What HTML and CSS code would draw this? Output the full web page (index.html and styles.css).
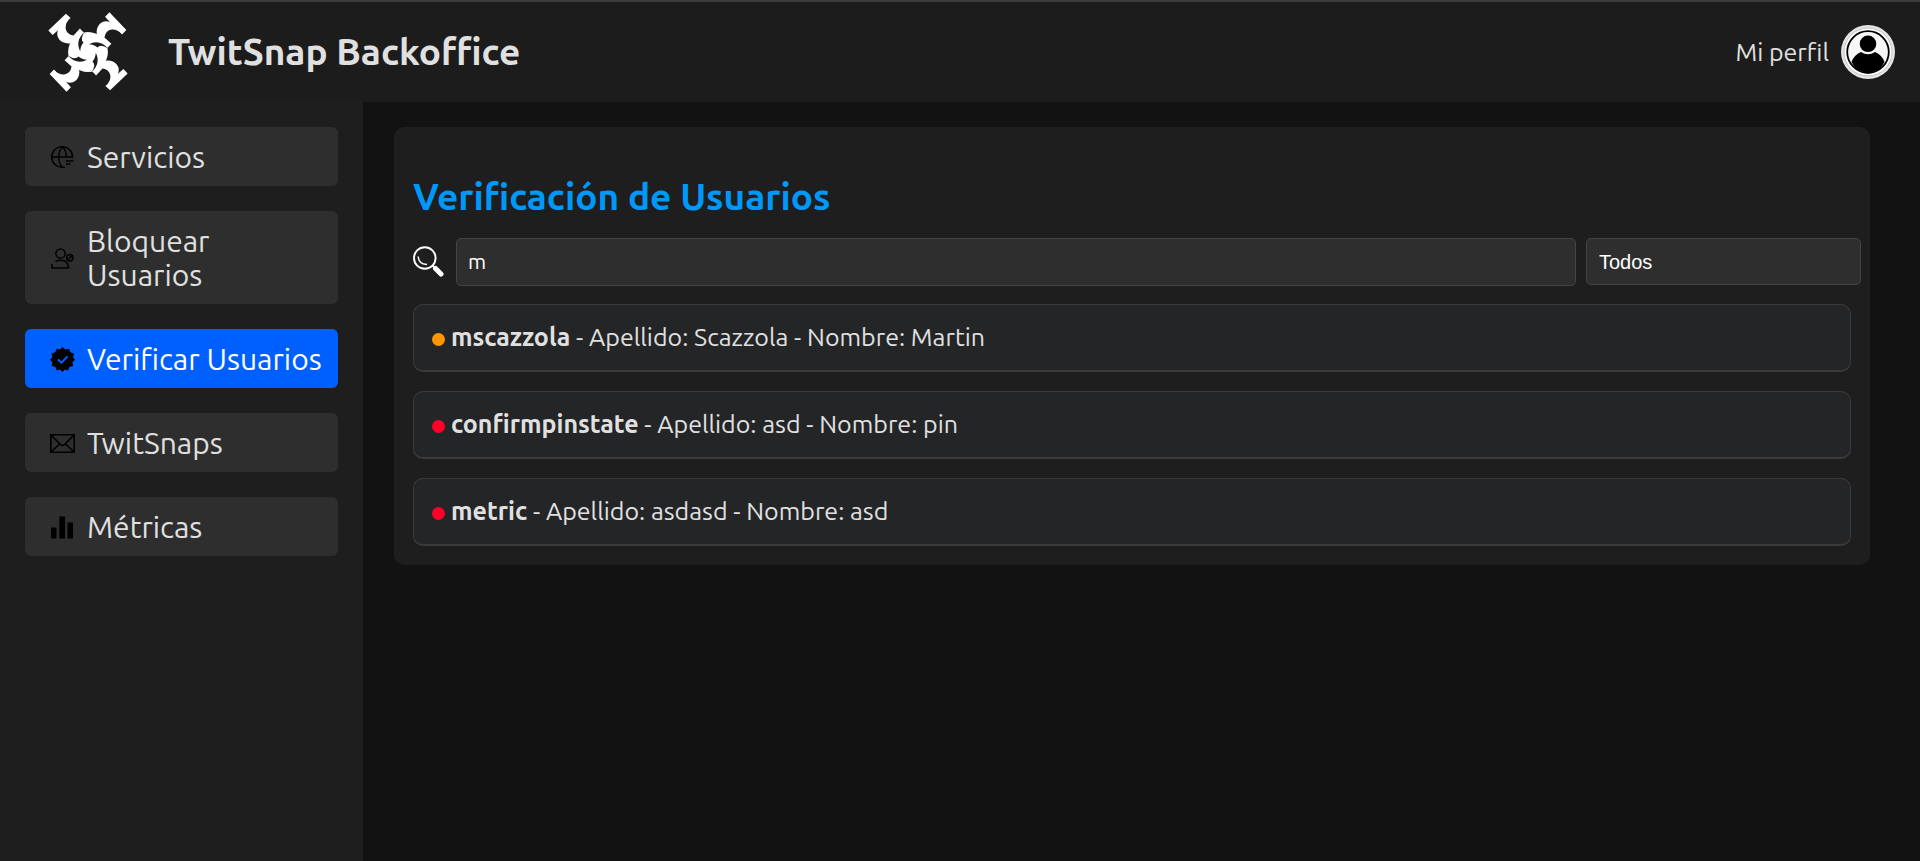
FILE: index.html
```html
<!DOCTYPE html>
<html lang="es">
<head>
<meta charset="utf-8">
<meta name="viewport" content="width=device-width, initial-scale=1">
<title>TwitSnap Backoffice</title>
<link rel="stylesheet" href="styles.css">
</head>
<body>
<header class="topbar">
  <div class="brand">
    <svg class="logo" viewBox="22 22 241 241" aria-hidden="true">
      <defs>
        <path id="arm" d="M207 23L258 76L245 90Q232 74 214 75Q195 78 192 99L213 118L200 131L176 111L160 92L169 90Q166 68 180 56Q192 46 208 52L194 36Z"/>
        <path id="gap" d="M132 82Q103 108 119 140Q120 123 129 114Q117 104 132 82Z"/>
      </defs>
      <g fill="#fff">
        <circle cx="142.500" cy="142.500" r="60"/>
        <use href="#arm"/>
        <use href="#arm" transform="rotate(90 142.5 142.5)"/>
        <use href="#arm" transform="rotate(180 142.5 142.5)"/>
        <use href="#arm" transform="rotate(270 142.5 142.5)"/>
      </g>
      <g fill="#1c1c1c">
        <use href="#gap"/>
        <use href="#gap" transform="rotate(90 142.5 142.5)"/>
        <use href="#gap" transform="rotate(180 142.5 142.5)"/>
        <use href="#gap" transform="rotate(270 142.5 142.5)"/>
      </g>
    </svg>
    <h1 class="brand-name">TwitSnap Backoffice</h1>
  </div>
  <a class="profile" href="#perfil">
    <span>Mi perfil</span>
    <svg class="avatar" viewBox="0 0 54 54" aria-hidden="true">
      <circle cx="27" cy="27" r="27" fill="#e4e4e4"/>
      <circle cx="27" cy="27" r="24" fill="#fff" stroke="#c4c4c4"/>
      <circle cx="27" cy="27" r="20.800" fill="#f7f7f7" stroke="#000" stroke-width="1.800"/>
      <circle cx="27" cy="18.800" r="8.300"/>
      <path d="M10.500 37Q13 30 20 27Q27 31.500 34 27Q41 30 43.500 37Q38 48.500 27 48.500Q16 48.500 10.500 37Z"/>
    </svg>
  </a>
</header>
<div class="layout">
  <nav class="sidebar">
    <a class="nav-item" href="#servicios">
      <svg class="nav-icon" viewBox="0 0 25 25" fill="none" stroke="#000" stroke-width="1.400" aria-hidden="true"><path d="M22.500 13.300V12A10.400 10.400 0 1 0 12.500 22.400H15M2 12H23M12.500 1.700C7.500 7 7.500 17 12.500 22.400M12.500 1.700C15.500 5 16.600 9 16.400 12M16 16H23.500M16 19H20.500"/></svg>
      <span>Servicios</span>
    </a>
    <a class="nav-item" href="#bloquear">
      <svg class="nav-icon" viewBox="0 0 25 25" fill="none" stroke="#000" stroke-width="1.500" aria-hidden="true"><circle cx="10.500" cy="7.500" r="4.600"/><path d="M5.500 15.500C13 12 18.500 16 18.500 22H2V18"/><circle cx="19.800" cy="11.800" r="3.200"/><path d="M17.600 14L22 9.600"/></svg>
      <span>Bloquear Usuarios</span>
    </a>
    <a class="nav-item nav-item-active" href="#verificar" aria-current="page">
      <svg class="nav-icon" viewBox="0 0 25 25" aria-hidden="true"><path d="M12.500 0L15.400 2.600L19.200 1.800L20.300 5.200L24 6.500L23 10L25 12.700L22.500 15.300L23.200 19L19.500 19.800L18.200 23.500L14.800 22.400L12.500 25L10 22.400L6.500 23.500L5.300 19.800L1.500 19L2.500 15.300L0 12.700L2.500 10L1.500 6.500L5.300 5.200L6.500 1.800L10 2.600Z"/><path d="M8 12.500L11.400 15.600L17.500 9.500" fill="none" stroke="#0060ff" stroke-width="1.900"/></svg>
      <span>Verificar Usuarios</span>
    </a>
    <a class="nav-item" href="#twitsnaps">
      <svg class="nav-icon" viewBox="0 0 25 25" fill="none" stroke="#000" stroke-width="1.600" aria-hidden="true"><path d="M.8 3.800H24.200V21.200H.8ZM1 4L10.500 13.500Q12.500 15.500 14.500 13.500L24 4M1 21L9.500 13M24 21L15.500 13"/></svg>
      <span>TwitSnaps</span>
    </a>
    <a class="nav-item" href="#metricas">
      <svg class="nav-icon" viewBox="0 0 25 25" aria-hidden="true"><path d="M1 12.500H6.500V23.500H1ZM9.300 1.500H15V23.500H9.300ZM17.500 7.500H23V23.500H17.500Z"/></svg>
      <span>Métricas</span>
    </a>
  </nav>
  <main class="content">
    <section class="card">
      <h2 class="card-title">Verificación de Usuarios</h2>
      <form class="filters">
        <label class="search-label" for="search" aria-label="Buscar">
          <svg class="search-icon" viewBox="0 0 31 31" fill="none" stroke="#fff" aria-hidden="true"><circle cx="11.800" cy="12" r="10.800" stroke-width="1.900"/><path d="M5.200 10.500Q5.500 18 14 18.500" stroke-width="1.500"/><path d="M19.500 19.500L22 22" stroke-width="2"/><path d="M22.500 22.500L28 28" stroke-width="5" stroke-linecap="round"/></svg>
        </label>
        <input class="search" id="search" type="text" value="m">
        <select class="status" aria-label="Estado"><option>Todos</option></select>
      </form>
      <ul class="users">
        <li class="user"><span class="dot dot-pending"></span><p class="user-text"><strong>mscazzola</strong> - Apellido: Scazzola - Nombre: Martin</p></li>
        <li class="user"><span class="dot"></span><p class="user-text"><strong>confirmpinstate</strong> - Apellido: asd - Nombre: pin</p></li>
        <li class="user"><span class="dot"></span><p class="user-text"><strong>metric</strong> - Apellido: asdasd - Nombre: asd</p></li>
      </ul>
    </section>
  </main>
</div>
</body>
</html>
```
FILE: styles.css
```css
* {
  box-sizing: border-box;
}

body {
  margin: 0;
  min-height: 100vh;
  display: flex;
  flex-direction: column;
  background: #121212;
  color: #e0e0e0;
  font-family: Ubuntu, Lato, sans-serif;
  font-weight: 400;
}

.topbar {
  display: flex;
  align-items: center;
  justify-content: space-between;
  border-top: 2px solid #3c3c3c;
  padding: 10px 25px 10px 48px;
  background: #1c1c1c;
}

.brand {
  display: flex;
  align-items: center;
  gap: 40px;
}

.logo {
  width: 80px;
  height: 80px;
}

.brand-name {
  margin: 0;
  font-size: 37px;
  line-height: 42px;
  font-weight: 700;
}

.profile {
  display: flex;
  align-items: center;
  gap: 12px;
  color: inherit;
  font-size: 25px;
  line-height: 28px;
  text-decoration: none;
}

.avatar {
  width: 54px;
  height: 54px;
}

.layout {
  flex: 1;
  display: flex;
}

.sidebar {
  flex: 0 0 363px;
  display: flex;
  flex-direction: column;
  gap: 25px;
  padding: 25px;
  background: #1e1e1e;
}

.nav-item {
  display: flex;
  align-items: center;
  gap: 12px;
  padding: 13px 12px 12px 25px;
  border-radius: 6px;
  background: #2e2e2e;
  color: inherit;
  font-size: 30px;
  line-height: 34px;
  text-decoration: none;
}

.nav-item-active {
  background: #0060ff;
  color: #fff;
}

.nav-icon {
  flex: none;
  width: 25px;
  height: 25px;
}

.content {
  flex: 1;
  min-width: 0;
  padding: 25px 50px 25px 31px;
}

.card {
  padding: 48px 9px 19px 19px;
  border-radius: 10px;
  background: #1e1e1e;
}

.card-title {
  margin: 0 0 19px;
  color: #0098f8;
  font-size: 37px;
  line-height: 44px;
  font-weight: 700;
}

.filters {
  display: flex;
  align-items: flex-start;
  gap: 10px;
  margin-bottom: 18px;
}

.search-label {
  display: flex;
  margin: 8px 2px 0 0;
}

.search-icon {
  width: 31px;
  height: 31px;
}

.search,
.status {
  height: 48px;
  margin: 0;
  padding: 0 12px;
  border: 1px solid #444;
  border-radius: 5px;
  background: #2e2e2e;
  color: #fff;
  font-family: "Liberation Sans", Arial, sans-serif;
  font-size: 20px;
}

.search {
  flex: 1;
  min-width: 0;
  padding: 0 11px 2px;
  font-family: Ubuntu, "Noto Sans", sans-serif;
  font-size: 21px;
}

.status {
  flex: 0 0 275px;
  height: 47px;
  appearance: none;
}

.users {
  display: grid;
  gap: 19px;
  margin: 0 10px 0 0;
  padding: 0;
  list-style: none;
}

.user {
  display: flex;
  align-items: center;
  gap: 6px;
  padding: 17px 18px 18px;
  border: 1px solid #3a3b3d;
  border-bottom-width: 2px;
  border-radius: 10px;
  background: #242527;
  font-size: 25px;
  line-height: 30px;
}

.user-text {
  margin: 0;
}

.user-text strong {
  font-weight: 700;
}

.dot {
  flex: none;
  width: 13px;
  height: 13px;
  margin-top: 4px;
  border-radius: 50%;
  background: #ff0028;
}

.dot-pending {
  background: #ff9500;
}
```
